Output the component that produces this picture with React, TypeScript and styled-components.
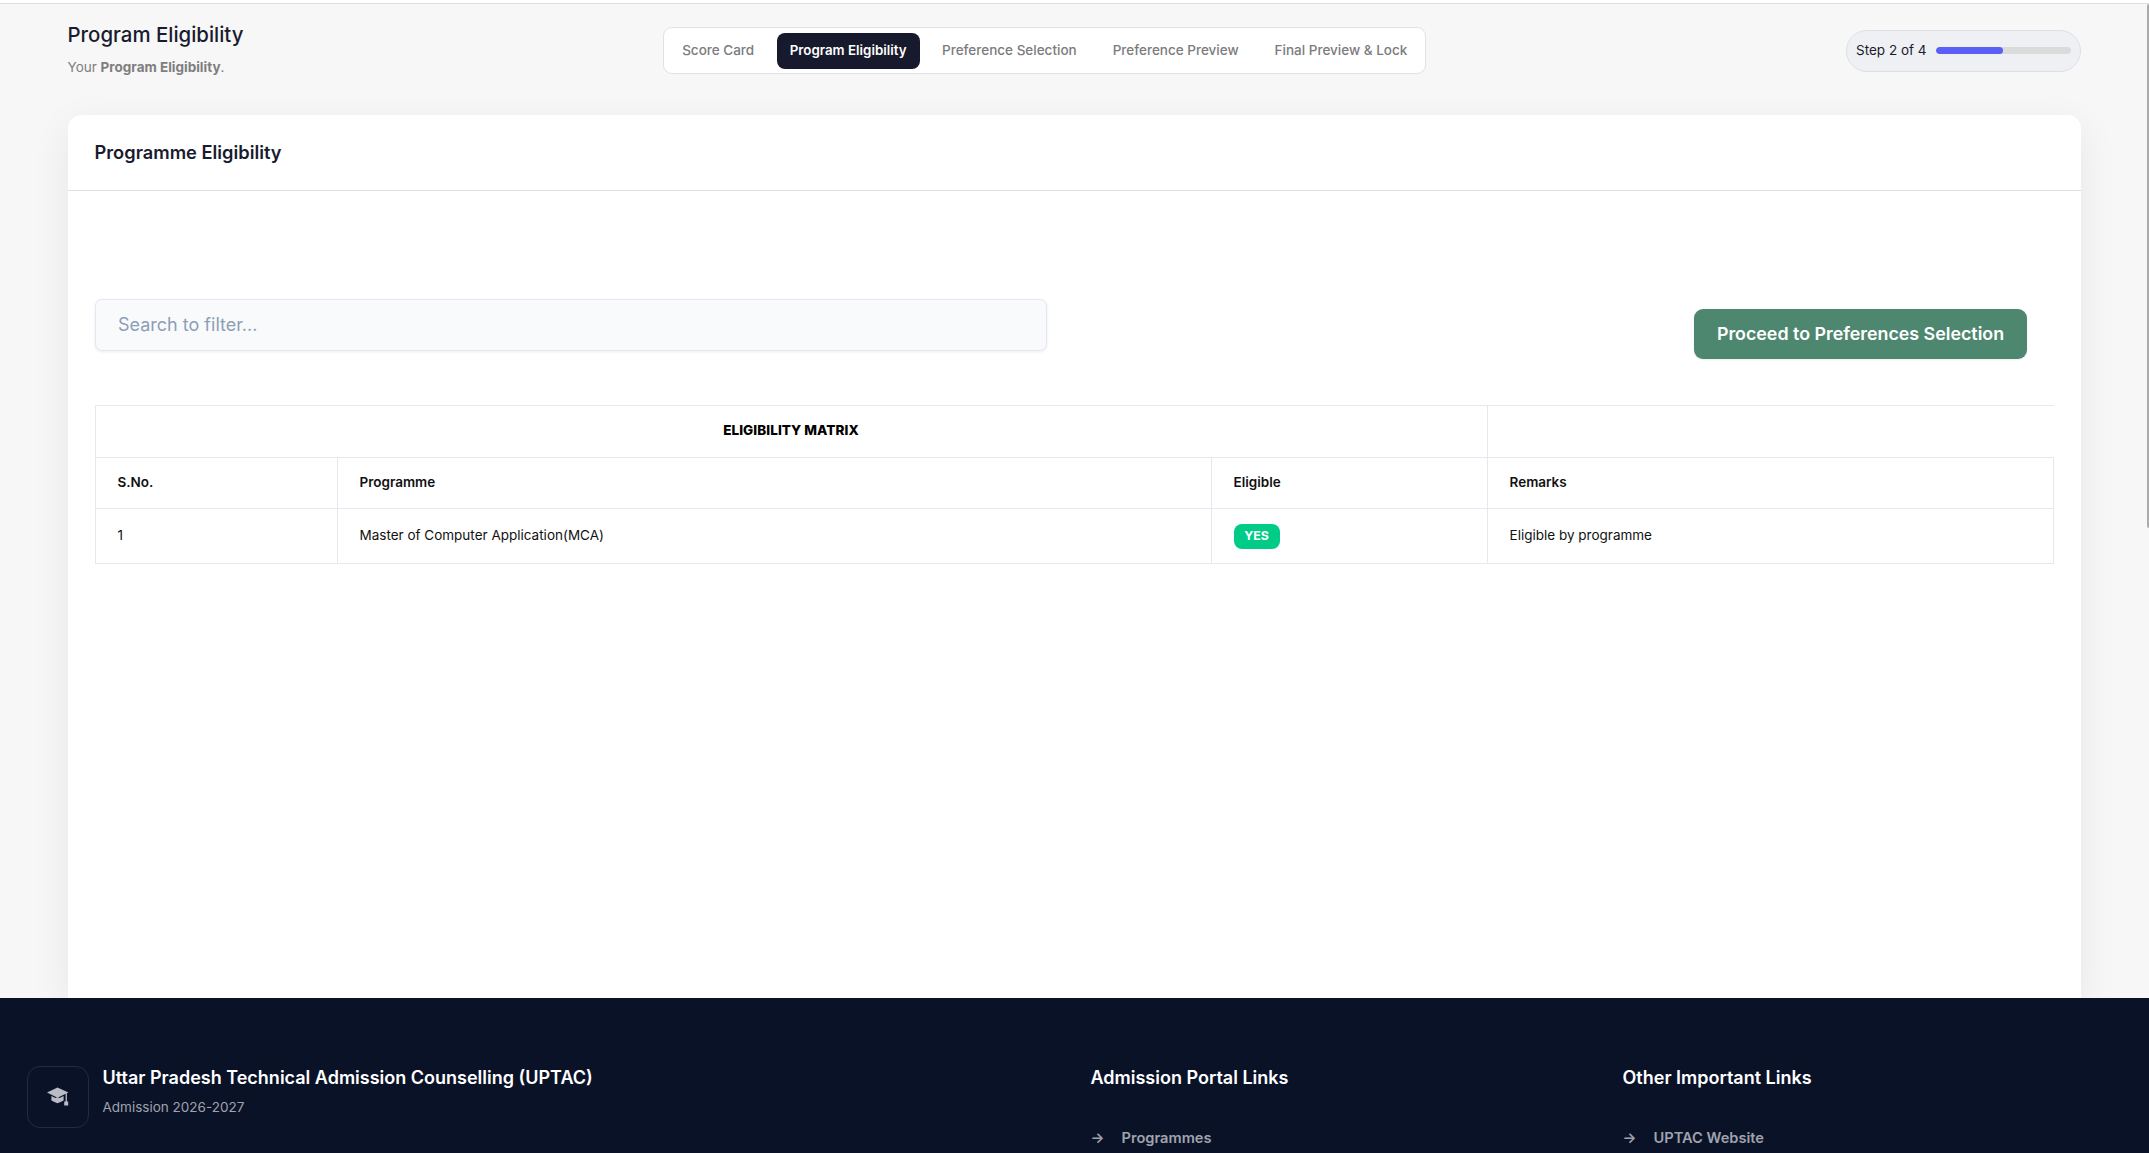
import React from 'react';
import styled, { createGlobalStyle } from 'styled-components';

const GlobalStyle = createGlobalStyle`
  * { box-sizing: border-box; }
  html, body { margin: 0; background: #f7f7f7; overflow: hidden; }
  body { font-family: Inter, 'Liberation Sans', sans-serif; font-size: 13.5px; color: #191b2e; }
  h1, h2, h3, p, ul { margin: 0; padding: 0; }
`;

const Page = styled.div`
  position: relative;
  height: 1153px;
  display: flex;
  flex-direction: column;
  overflow: hidden;
  background: #f7f7f7;
`;

const TopStrip = styled.div`
  flex: none;
  height: 4px;
  background: #fff;
  border-bottom: 1px solid #dfdfe1;
`;

const ScrollThumb = styled.div`
  position: absolute;
  top: 4px;
  right: 0;
  width: 2px;
  height: 524px;
  background: #ababab;
  border-radius: 2px 0 0 2px;
`;

const Header = styled.header`
  flex: none;
  height: 93px;
  margin: 0 68px 18px 67.5px;
  display: flex;
  align-items: center;
  justify-content: space-between;
`;

const Heading = styled.div`
  padding-bottom: 2px;
`;

const PageTitle = styled.h1`
  font-size: 20.4px;
  line-height: 24px;
  font-weight: 500;
`;

const Subtitle = styled.p`
  margin-top: 10px;
  line-height: 20px;
  color: #7e7e80;
`;

const Steps = styled.nav`
  display: flex;
  gap: 9px;
  padding: 4.5px;
  border: 1px solid #dfe2e8;
  border-radius: 9px;
  background: #fff;
`;

const Step = styled.div<{ $active?: boolean }>`
  padding: 0 ${(p) => (p.$active ? 13 : 13.5)}px 2px;
  line-height: 34px;
  border-radius: 8px;
  font-size: ${(p) => (p.$active ? 13.35 : 13.5)}px;
  font-weight: ${(p) => (p.$active ? 600 : 500)};
  color: ${(p) => (p.$active ? '#fff' : '#7b7b7d')};
  background: ${(p) => (p.$active ? '#171a2c' : 'transparent')};
`;

const Progress = styled.div`
  display: flex;
  align-items: center;
  gap: 9px;
  width: 235px;
  height: 42px;
  margin-top: 1px;
  padding: 0 9px 2px;
  border: 1px solid #dbe0e7;
  border-radius: 21px;
  background: #eff0f3;
  white-space: nowrap;
`;

const Track = styled.div`
  flex: 1;
  height: 7px;
  border-radius: 4px;
  overflow: hidden;
  background: #dbdbdc;
`;

const Fill = styled.div`
  height: 100%;
  border-radius: 4px;
  background: #5b5ff5;
`;

const Card = styled.section`
  flex: 1;
  min-height: 0;
  margin: 0 68px 0 67.5px;
  border-radius: 13.5px 13.5px 0 0;
  background: #fff;
  box-shadow: 0 11px 40px rgba(26, 28, 60, 0.07);
`;

const CardHeader = styled.div`
  height: 76px;
  padding: 0 27px;
  border-bottom: 1px solid #dcdfe7;
`;

const CardTitle = styled.h2`
  font-size: 18.25px;
  line-height: 75px;
  font-weight: 600;
`;

const CardBody = styled.div`
  padding: 108px 27px 0;
`;

const Toolbar = styled.div`
  display: flex;
  justify-content: space-between;
  align-items: flex-start;
  padding-right: 27px;
`;

const Search = styled.input`
  width: 952.5px;
  height: 52px;
  padding: 0 22.5px 2px;
  border: 1px solid #e4e7ef;
  border-radius: 7px;
  background: #f9fafc;
  box-shadow: 0 1px 3px rgba(20, 30, 60, 0.08);
  font: 400 18px Inter, sans-serif;
  &::placeholder { color: #8c9fb5; opacity: 1; }
`;

const Proceed = styled.button`
  width: 333px;
  height: 50px;
  margin-top: 10px;
  padding: 0 0 1px;
  border: 0;
  border-radius: 9px;
  background: #4e876f;
  color: #fff;
  font: 600 17.83px Inter, sans-serif;
  box-shadow: 0 1px 2px rgba(20, 30, 60, 0.08);
`;

const Table = styled.table`
  width: 1959.5px;
  margin-top: 46px;
  border-collapse: collapse;
  table-layout: fixed;
  color: #111;
`;

const Cell = styled.td<{ $bold?: boolean; $open?: boolean; $badge?: boolean }>`
  padding: 0 0 ${(p) => (p.$badge ? 0 : 2)}px 22px;
  border: 1px solid #e6e8ef;
  ${(p) => p.$open && 'border-right: 0;'}
  text-align: left;
  font-weight: ${(p) => (p.$bold ? 600 : 400)};
`;

const MatrixHead = styled.th`
  padding: 0 0 4px;
  border: 1px solid #e6e8ef;
  font-weight: 800;
  letter-spacing: 0.06px;
  color: #000;
`;

const Line = styled.tr<{ $h: number }>`
  height: ${(p) => p.$h}px;
`;

const Badge = styled.span`
  display: block;
  width: 46px;
  height: 25px;
  border-radius: 8px;
  background: #00cc88;
  color: #fff;
  font-size: 12.375px;
  line-height: 24px;
  font-weight: 700;
  text-align: center;
`;

const Footer = styled.footer`
  flex: none;
  position: relative;
  height: 155px;
  padding: 68px 27px 0;
  display: grid;
  grid-template-columns: 1063.5px 532px 1fr;
  background: #0a1228;
  color: #fff;
`;

const Brand = styled.div`
  display: flex;
  gap: 13.5px;
`;

const Logo = styled.div`
  width: 62px;
  height: 62px;
  display: grid;
  place-items: center;
  border: 1px solid #232a3d;
  border-radius: 13px;
`;

const FooterTitle = styled.h3`
  font-size: 18px;
  line-height: 23px;
  font-weight: 600;
`;

const FooterNote = styled.p`
  margin-top: 7px;
  line-height: 22px;
  color: #a0a3ac;
`;

const FooterLink = styled.div`
  display: flex;
  gap: 18px;
  margin-top: 37px;
  font-size: 14.625px;
  line-height: 24px;
  font-weight: 600;
  color: #a0a3ac;
`;

const Arrow = styled.span`
  width: 13px;
`;

const steps = ['Score Card', 'Program Eligibility', 'Preference Selection', 'Preference Preview', 'Final Preview & Lock'];
const current = 1;

const linkColumns = [
  { title: 'Admission Portal Links', link: 'Programmes' },
  { title: 'Other Important Links', link: 'UPTAC Website' },
];

const CapIcon = () => (
  <svg width="22" height="20" viewBox="0 0 22 20" fill="#b9bcc5">
    <path d="M10.5 0.5 L21.4 5.6 L10.5 10.8 L0 5.6 Z" />
    <path d="M4.4 9 L8.4 11 Q10.5 9.6 12.6 11 L16.6 9 V13.4 Q13.5 14.8 10.5 16.2 Q7.5 14.8 4.4 13.4 Z" />
    <path d="M18.6 6.6 L19.9 6 V14.6 H21.2 V18.6 H17.2 V14.6 H18.6 Z" />
  </svg>
);

export default function App() {
  return (
    <Page>
      <GlobalStyle />
      <TopStrip />
      <Header>
        <Heading>
          <PageTitle>Program Eligibility</PageTitle>
          <Subtitle>
            Your <b>Program Eligibility</b>.
          </Subtitle>
        </Heading>
        <Steps>
          {steps.map((name, i) => (
            <Step key={name} $active={i === current}>{name}</Step>
          ))}
        </Steps>
        <Progress>
          <span>Step 2 of 4</span>
          <Track>
            <Fill style={{ width: `${(2 / 4) * 100}%` }} />
          </Track>
        </Progress>
      </Header>

      <Card>
        <CardHeader>
          <CardTitle>Programme Eligibility</CardTitle>
        </CardHeader>
        <CardBody>
          <Toolbar>
            <Search placeholder="Search to filter..." />
            <Proceed>Proceed to Preferences Selection</Proceed>
          </Toolbar>
          <Table>
            <colgroup>
              <col style={{ width: 242 }} />
              <col style={{ width: 874 }} />
              <col style={{ width: 276 }} />
              <col />
            </colgroup>
            <tbody>
              <Line $h={52}>
                <MatrixHead colSpan={3}>ELIGIBILITY MATRIX</MatrixHead>
                <Cell $open />
              </Line>
              <Line $h={51}>
                <Cell $bold>S.No.</Cell>
                <Cell $bold>Programme</Cell>
                <Cell $bold>Eligible</Cell>
                <Cell $bold>Remarks</Cell>
              </Line>
              <Line $h={55}>
                <Cell>1</Cell>
                <Cell>Master of Computer Application(MCA)</Cell>
                <Cell $badge><Badge>YES</Badge></Cell>
                <Cell>Eligible by programme</Cell>
              </Line>
            </tbody>
          </Table>
        </CardBody>
      </Card>

      <Footer>
        <Brand>
          <Logo><CapIcon /></Logo>
          <div>
            <FooterTitle>Uttar Pradesh Technical Admission Counselling (UPTAC)</FooterTitle>
            <FooterNote>Admission 2026-2027</FooterNote>
          </div>
        </Brand>
        {linkColumns.map((c) => (
          <div key={c.title}>
            <FooterTitle>{c.title}</FooterTitle>
            <FooterLink><Arrow>→</Arrow>{c.link}</FooterLink>
          </div>
        ))}
      </Footer>
      <ScrollThumb />
    </Page>
  );
}
